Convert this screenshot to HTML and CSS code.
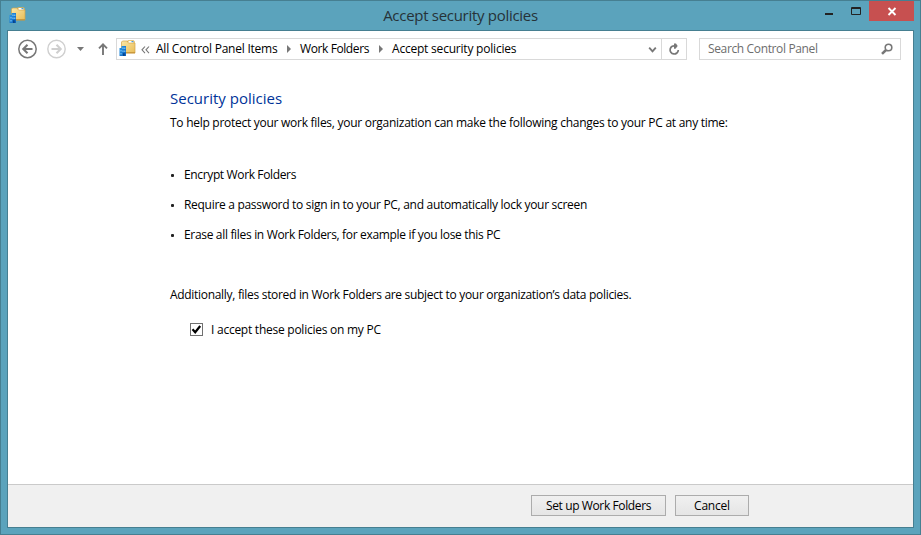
FILE: index.html
```html
<!DOCTYPE html>
<html lang="en">
<head>
<meta charset="utf-8">
<title>Accept security policies</title>
<link rel="stylesheet" href="styles.css">
</head>
<body>
<svg class="defs" width="0" height="0" aria-hidden="true">
  <defs>
    <linearGradient id="gold" x1="0" y1="0" x2="1" y2="1">
      <stop offset="0" stop-color="#fbe7a6"/><stop offset="1" stop-color="#e9bd58"/>
    </linearGradient>
    <linearGradient id="blue" x1="0" y1="0" x2="1" y2="1">
      <stop offset="0" stop-color="#2c9be8"/><stop offset="1" stop-color="#0a5cba"/>
    </linearGradient>
    <symbol id="work-folder" viewBox="0 0 17 17">
      <path d="M8 2.500V1l1-.8h5.500l1.200 1V4z" fill="#e2b450"/>
      <path d="M2.500 2l1-1H8l1.500 2H16v10H2.500z" fill="url(#gold)" stroke="#d3a347" stroke-width=".7"/>
      <path d="M9.500 1h5v1.700h-5z" fill="#fff"/>
      <path d="M12.500 1h2v1.200h-2z" fill="#4a9bd8"/>
      <path d="M3 12.800h13" stroke="#c18d32"/>
      <path d="M2.500 6H7v10H.5V8h2z" fill="url(#blue)"/>
      <path d="M3.500 7.500h1V9h-1zM5.300 7.500h1V9h-1zM1.500 10h1v1.500h-1zM3.500 10.500h1V12h-1zM5.300 10.500h1V12h-1zM1.500 13h1v1.500h-1z" fill="#8fd2fa"/>
      <path d="M4 13.300h1.700V16H4z" fill="#064489"/>
    </symbol>
  </defs>
</svg>
<div class="window">
  <header class="titlebar">
    <svg class="app-icon"><use href="#work-folder"/></svg>
    <h1 class="title">Accept security policies</h1>
    <div class="controls">
      <svg class="minimize" width="31" height="20"><path d="M5 12h8v2H5z" fill="#222"/></svg>
      <svg class="maximize" width="18" height="20"><path d="M.5 6.500h9v7h-9z M0 7.500h10" fill="none" stroke="#222"/></svg>
      <div class="close"><svg width="45" height="20"><path d="M19.500 7l7 7M26.500 7l-7 7" stroke="#fff" stroke-width="1.900"/></svg></div>
    </div>
  </header>
  <div class="client">
    <nav class="toolbar">
      <svg class="nav-icons" width="108" height="36">
        <g fill="none" stroke="#777" stroke-width="1.500"><circle cx="19.500" cy="18" r="8.700"/><path d="M24.500 18H16M19.500 13.800L15.300 18l4.200 4.200" stroke-width="2.100"/></g>
        <g fill="none" stroke="#cfcfcf" stroke-width="1.400"><circle cx="48.500" cy="18" r="8.700"/><path d="M43.500 18H52M48.500 13.800l4.200 4.200-4.200 4.200" stroke-width="2.100"/></g>
        <path d="M69 16h7l-3.500 4z" fill="#777"/>
        <path d="M95 24V13.500M91 17.300L95 13.300l4 4" fill="none" stroke="#777" stroke-width="1.900"/>
      </svg>
      <div class="address">
        <svg class="folder"><use href="#work-folder"/></svg>
        <svg class="more" width="9" height="9"><path d="M4 1.500L1 4.800 4 8.100M8 1.500L5 4.800l3 3.300" fill="none" stroke="#777" stroke-width="1.100"/></svg>
        <span class="crumb crumb-root">All Control Panel Items</span>
        <svg class="arrow" width="4" height="8"><path d="M0 0l4 4-4 4z" fill="#777"/></svg>
        <span class="crumb crumb-app">Work Folders</span>
        <svg class="arrow" width="4" height="8"><path d="M0 0l4 4-4 4z" fill="#777"/></svg>
        <span class="crumb crumb-page">Accept security policies</span>
        <svg class="chevron" width="9" height="7"><path d="M1.200 1.700l3.300 3.600 3.300-3.600" fill="none" stroke="#777" stroke-width="1.900"/></svg>
        <div class="refresh"><svg width="12" height="13"><path d="M7.500 3A4.100 4.100 0 1 0 10.300 7" fill="none" stroke="#777" stroke-width="1.700"/><path d="M6 .5v5.200h1.500L9.700 3 8 .5z" fill="#777"/></svg></div>
      </div>
      <div class="search"><span class="search-text">Search Control Panel</span>
        <svg width="12" height="12"><circle cx="7.500" cy="4.500" r="3.300" fill="none" stroke="#777" stroke-width="1.600"/><path d="M5 7L1 10.800" stroke="#777" stroke-width="2.500"/></svg>
      </div>
    </nav>
    <main class="content">
      <h2><span class="heading">Security policies</span></h2>
      <p class="intro">To help protect your work files, your organization can make the following changes to your PC at any time:</p>
      <ul>
        <li class="encrypt">Encrypt Work Folders</li>
        <li class="password">Require a password to sign in to your PC, and automatically lock your screen</li>
        <li class="erase">Erase all files in Work Folders, for example if you lose this PC</li>
      </ul>
      <p class="extra">Additionally, files stored in Work Folders are subject to your organization’s data policies.</p>
      <label class="accept"><span class="checkbox"><svg width="11" height="11"><path d="M1.500 5.300l2.700 3L9.200 2" fill="none" stroke="#000" stroke-width="2.200"/></svg></span><span>I accept these policies on my PC</span></label>
    </main>
    <footer class="footer">
      <button class="setup">Set up Work Folders</button>
      <button class="cancel">Cancel</button>
    </footer>
  </div>
</div>
</body>
</html>
```
FILE: styles.css
```css
* { box-sizing: border-box; }
body { margin: 0; font: 12px/16px "Open Sans", "Noto Sans", sans-serif; color: #000; }
.defs { position: absolute; }
svg { display: block; flex: none; }
h1, h2, p, ul { margin: 0; padding: 0; font-weight: 400; }
span, p, li { white-space: nowrap; }
.window { width: 921px; height: 535px; border: 1px solid #467f91; background: #5ba3bc; padding: 0 6px 6px; }
.titlebar { height: 29px; display: grid; grid-template-columns: 180px 1fr 180px; }
.app-icon { width: 17px; height: 17px; margin: 6px 0 0 2px; }
.title { font-size: 15px; line-height: 29px; text-align: center; color: #263238; letter-spacing: -.29px; }
.controls { display: flex; justify-content: flex-end; }
.close { width: 45px; height: 20px; background: #c75050; }
.client { height: 498px; border: 1px solid #467f91; background: #fff; display: flex; flex-direction: column; }
.toolbar { display: flex; height: 36px; flex: none; }
.address { display: flex; align-items: center; width: 571px; height: 22px; margin-top: 7px; border: 1px solid #d9d9d9; }
.folder { width: 17px; height: 17px; margin: 0 5px 2px 2px; }
.more { margin-right: 6px; }
.crumb-root { width: 131px; letter-spacing: -.23px; }
.arrow { margin-right: 9px; }
.crumb-app { width: 79px; letter-spacing: -.4px; }
.crumb-page { letter-spacing: -.21px; }
.chevron { margin: 0 4px 0 auto; }
.refresh { width: 25px; height: 20px; border-left: 1px solid #d9d9d9; display: flex; align-items: center; justify-content: center; }
.search { display: flex; align-items: center; justify-content: space-between; width: 202px; height: 22px; margin: 7px 0 0 12px; padding: 0 7px 0 8px; border: 1px solid #d9d9d9; color: #6d6d6d; letter-spacing: -.36px; }
.content { flex: 1; padding: 21px 0 0 162px; }
h2 { font-size: 15px; line-height: 20px; color: #039; }
.intro { margin-top: 7px; letter-spacing: -.27px; }
ul { list-style: none; margin-top: 36px; }
li { height: 30px; display: flex; }
li::before { content: ""; width: 3px; height: 3px; border-radius: 1px; background: #222; margin: 7px 10px 0 1px; }
.encrypt { letter-spacing: -.36px; }
.password { letter-spacing: -.3px; }
.erase { letter-spacing: -.325px; }
.extra { margin-top: 30px; letter-spacing: -.305px; }
.accept { display: flex; margin: 19px 0 0 20px; letter-spacing: -.25px; }
.checkbox { width: 13px; height: 13px; border: 1px solid #707070; margin: 1px 8px 0 0; }
.footer { height: 43px; flex: none; border-top: 1px solid #cacaca; background: #f0f0f0; display: flex; gap: 9px; padding: 10px 0 0 523px; }
button { height: 21px; padding: 0; border: 1px solid #acacac; background: linear-gradient(#f0f0f0, #e5e5e5); color: #000; font: inherit; line-height: 19px; }
.setup { width: 135px; letter-spacing: -.38px; }
.cancel { width: 74px; letter-spacing: -.2px; }
```
